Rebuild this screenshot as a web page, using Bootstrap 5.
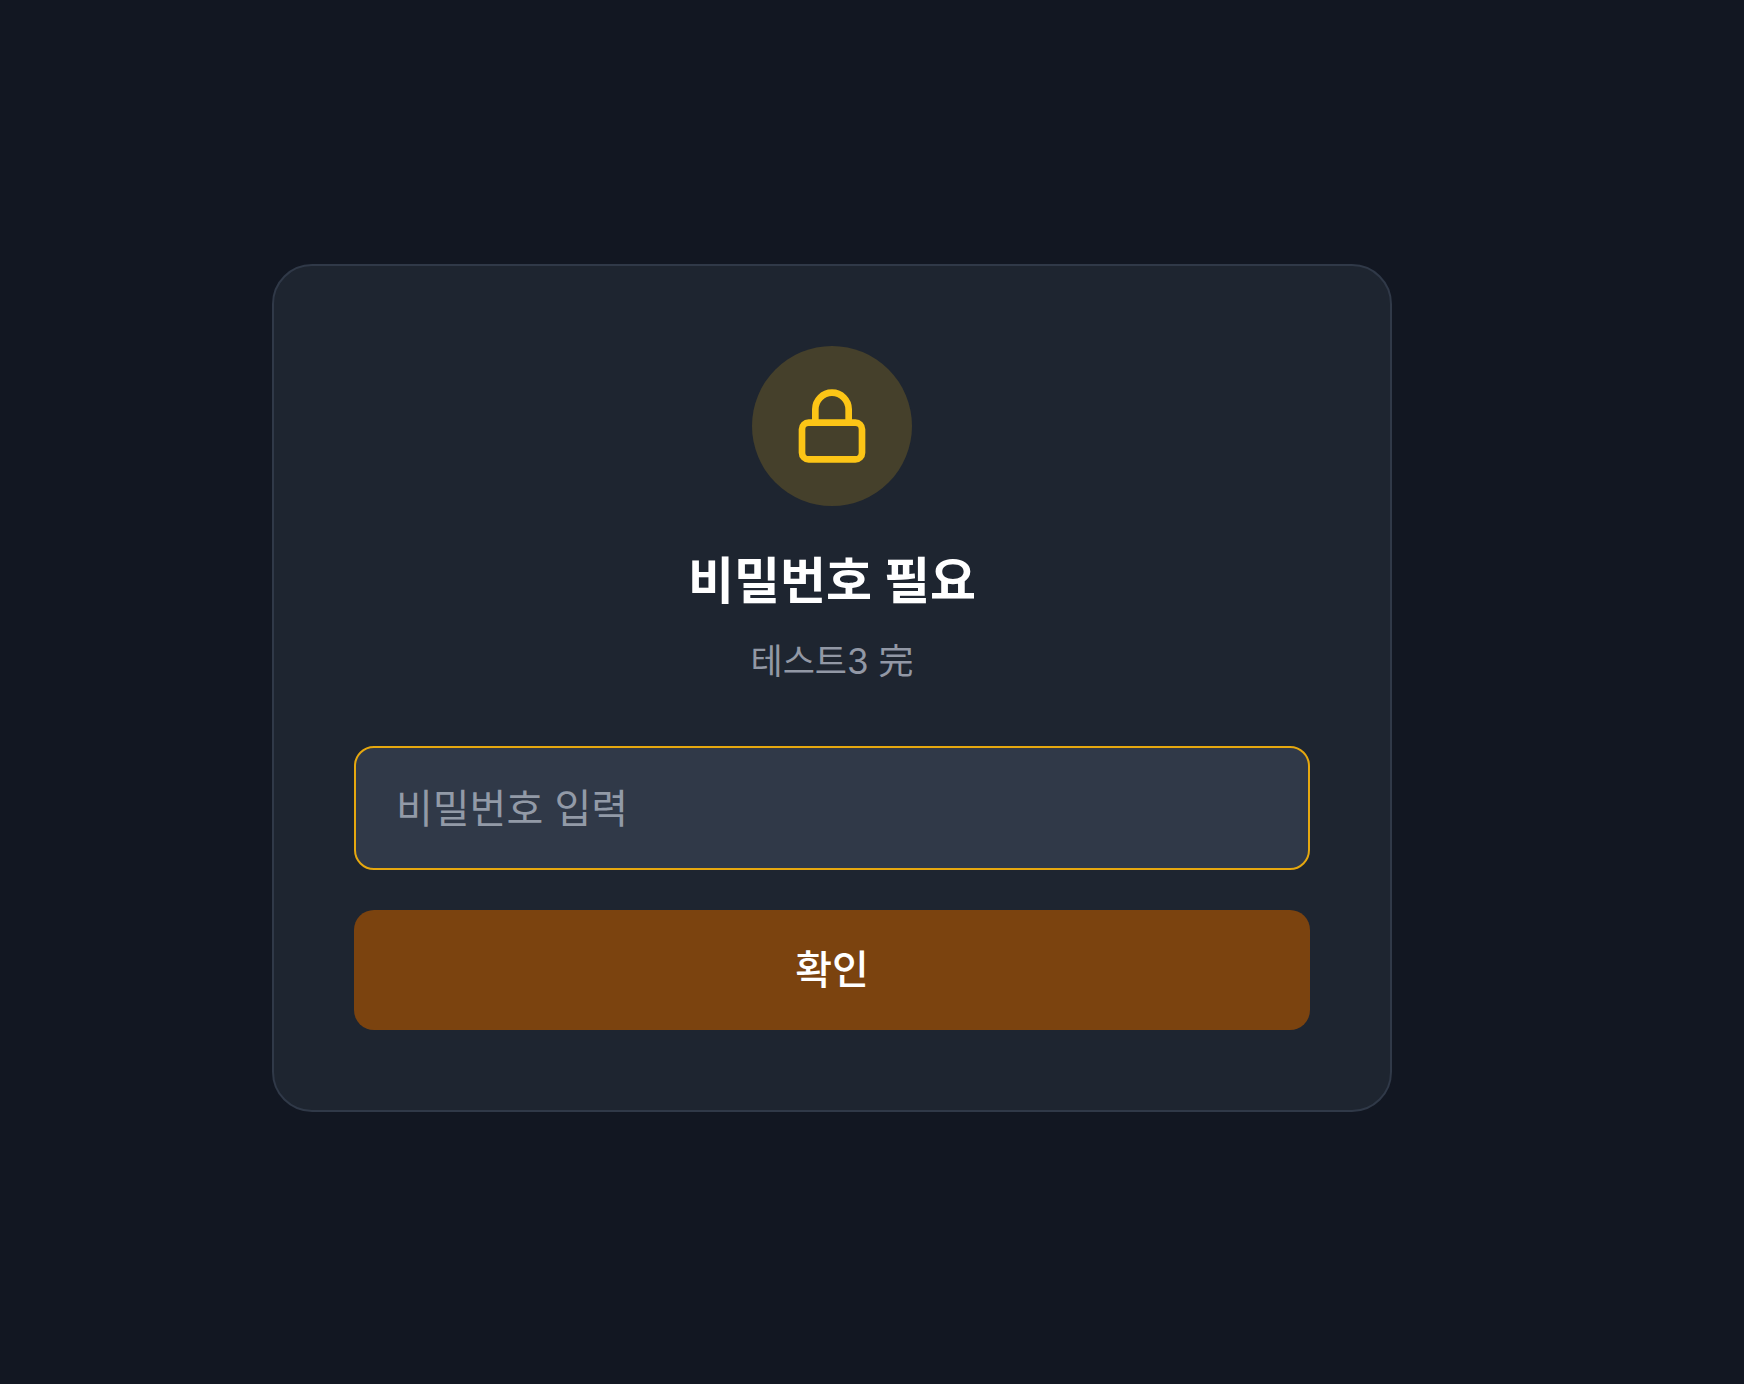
<!DOCTYPE html>
<html lang="ko">
<head>
<meta charset="utf-8">
<meta name="viewport" content="width=device-width, initial-scale=1">
<title>비밀번호 필요</title>
<link href="https://cdn.jsdelivr.net/npm/bootstrap@5.3.0/dist/css/bootstrap.min.css" rel="stylesheet">
<style>
  body {
    background: #121722;
    font-family: Inter, "Noto Sans CJK KR", sans-serif;
    font-size: 40px;
    line-height: 60px;
  }
  .gate-page { padding: 0 80px 8px 0; }
  .gate-card {
    max-width: 1120px;
    padding: 80px;
    background: #1e2530;
    border: 2px solid #303948;
    border-radius: 40px;
  }
  .lock-disc {
    width: 160px;
    height: 160px;
    margin-bottom: 40px;
    background: #45402b;
    color: #fcc516;
  }
  .gate-title { font-size: 50px; line-height: 70px; margin-bottom: 20px; }
  .gate-subtitle {
    font-size: 35px;
    line-height: 50px;
    margin-bottom: 60px;
    color: #9298a5;
  }
  .gate-form { gap: 40px; }
  .gate-input, .gate-input:focus {
    height: 124px;
    padding: 30px 40px;
    font-size: 40px;
    line-height: 60px;
    color: #fff;
    background: #303948;
    border: 2px solid #e6a80f;
    border-radius: 20px;
    box-shadow: none;
  }
  .gate-input::placeholder { color: #929aa7; opacity: 1; }
  .gate-submit, .gate-submit:hover {
    padding: 30px;
    font-size: 40px;
    line-height: 60px;
    font-weight: 500;
    color: #fff;
    background: #7b430f;
    border: 0;
    border-radius: 20px;
  }
</style>
<script src="https://cdn.jsdelivr.net/npm/bootstrap@5.3.0/dist/js/bootstrap.bundle.min.js" defer></script>
</head>
<body>
<main class="gate-page min-vh-100 d-flex align-items-center justify-content-center">
  <section class="gate-card w-100">
    <header class="d-flex flex-column align-items-center text-center">
      <div class="lock-disc rounded-circle d-flex align-items-center justify-content-center">
        <svg width="80" height="80" viewBox="0 0 24 24" fill="none" stroke="currentColor" stroke-width="2" stroke-linecap="round" stroke-linejoin="round" aria-hidden="true">
          <rect x="3" y="11" width="18" height="11" rx="2"/>
          <path d="M7 11V7a5 5 0 0 1 10 0v4"/>
        </svg>
      </div>
      <h1 class="gate-title fw-bold text-white" id="gate-title">비밀번호 필요</h1>
      <p class="gate-subtitle">테스트3 完</p>
    </header>
    <form class="gate-form d-flex flex-column">
      <input class="gate-input form-control" type="password" id="password" aria-labelledby="gate-title" placeholder="비밀번호 입력">
      <button class="gate-submit btn w-100" type="button">확인</button>
    </form>
  </section>
</main>
</body>
</html>
